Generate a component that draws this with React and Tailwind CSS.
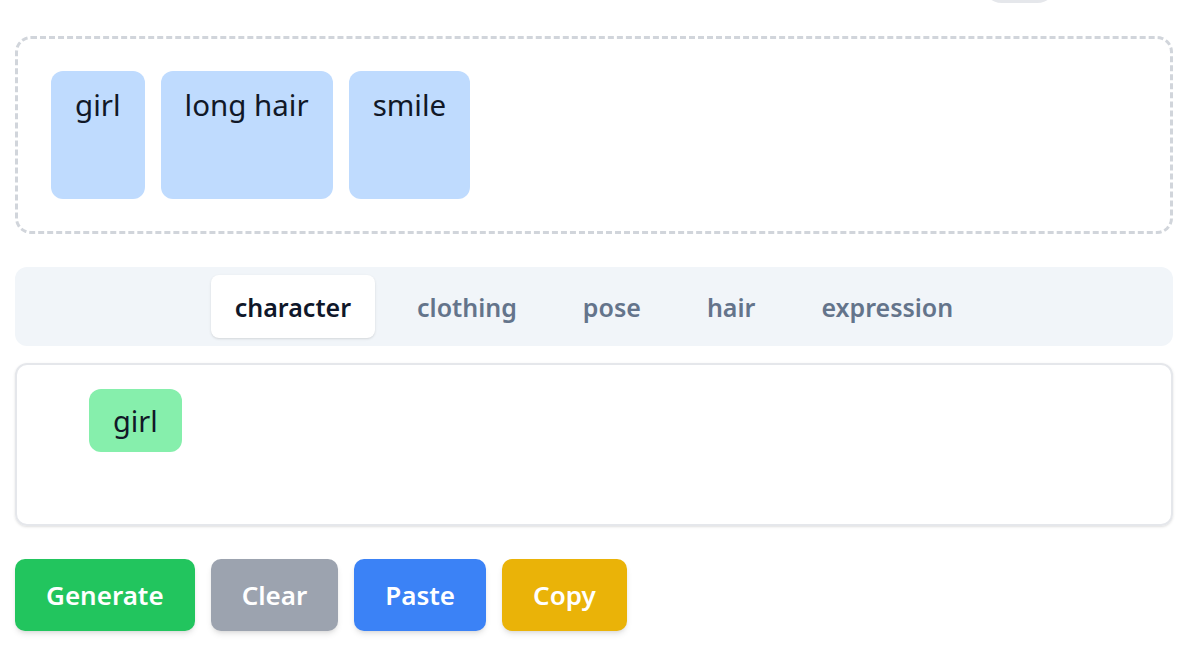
import React from "react";

const App = () => {

  const selected = ["girl", "long hair", "smile"];

  const tabs = ["character", "clothing", "pose", "hair", "expression"];

  const buttons = [
    { label: "Generate", color: "bg-[#22c55e]" },
    { label: "Clear", color: "bg-[#9ca3af]" },
    { label: "Paste", color: "bg-[#3b82f6]" },
    { label: "Copy", color: "bg-[#eab308]" }
  ];

  return (

    <div
      className="min-h-screen bg-white px-[15px] overflow-hidden"
      style={{ fontFamily: '"Noto Sans", "Open Sans", sans-serif' }}
    >

      {/* cut-off pill at the very top */}

      <div className="ml-[967px] -mt-[37px] h-[40px] w-[75px] rounded-[20px] bg-[#e5e7eb]" />


      {/* Selected tags */}

      <div className="mt-[33px] h-[198px] rounded-2xl border-[3px] border-dashed border-[#d1d5db] px-[33px] py-[32px] flex gap-4">

        {selected.map((tag) => (

          <div
            key={tag}
            className="rounded-xl bg-[#bfdbfe] px-6 pt-[12px] text-[29.5px] leading-[44px] text-[#111827]"
          >
            {tag}
          </div>

        ))}

      </div>


      {/* Category tabs */}

      <div className="mt-[33px] h-[79px] rounded-xl bg-[#f1f5f9] p-2 flex justify-center gap-[18px]">

        {tabs.map((tab, i) => (

          <button
            key={tab}
            className={`rounded-lg px-6 pt-[3px] text-[25px] font-semibold ${i === 0 ? "bg-white text-[#0f172a] shadow-sm" : "text-[#64748b]"}`}
          >
            {tab}
          </button>

        ))}

      </div>


      {/* Tag options */}

      <div className="mt-[17px] h-[163px] rounded-xl border-2 border-[#e5e7eb] shadow-sm pl-[72px] pt-6">

        <span className="inline-flex h-[63px] items-center rounded-xl bg-[#86efac] px-6 text-[29px] text-[#111827]">
          girl
        </span>

      </div>


      {/* Actions */}

      <div className="mt-[33px] flex gap-4">

        {buttons.map((btn) => (

          <button
            key={btn.label}
            className={`h-[72px] rounded-[10px] px-[31px] text-[26px] font-semibold text-white shadow-md ${btn.color}`}
          >
            {btn.label}
          </button>

        ))}

      </div>

    </div>

  );

};

export default App;
